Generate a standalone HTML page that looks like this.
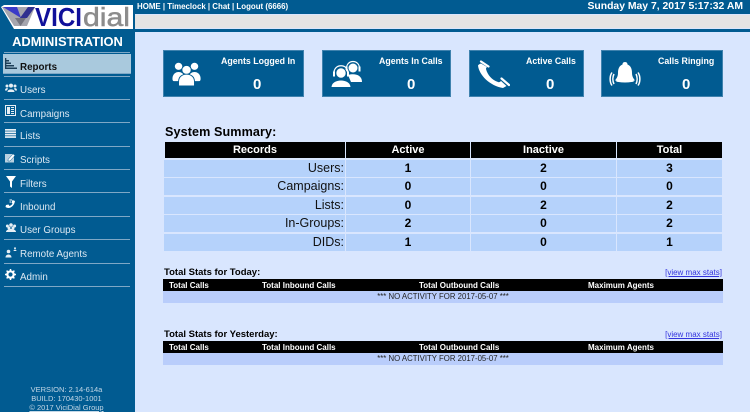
<!DOCTYPE html>
<html><head><meta charset="utf-8"><style>
html,body{margin:0;padding:0}
body{width:750px;height:412px;position:relative;overflow:hidden;background:#D9E6FE;font-family:"Liberation Sans",sans-serif;color:#000}
.a{position:absolute;white-space:nowrap}
.side{left:0;top:0;width:135px;height:412px;background:#015B91}
.m{left:20px;font-size:9.8px;color:#DCE8F2;line-height:14px}
.hr{left:4px;width:126px;height:1px;background:#7FA8C6}
.card{background:#015B91;border:1px solid #3F82AE;box-sizing:border-box;top:50px;height:47px;color:#fff;font-weight:bold}
.card .t{position:absolute;top:5px;font-size:8.8px;line-height:10px;white-space:nowrap}
.card .n{position:absolute;top:25px;font-size:15px;line-height:17px}
.h{background:#000;color:#fff;font-weight:bold;font-size:11px;text-align:center;line-height:17px;height:16px;top:142px}
.c{background:#B5D2FB;font-size:12px;line-height:17px;height:17px;text-align:center;font-weight:bold}
.l{left:164px;width:181px;text-align:right;font-weight:normal;font-size:12.5px;box-sizing:border-box;padding-right:1px;color:#111}
.x1{left:346px;width:124px}.x2{left:471px;width:145px}.x3{left:617px;width:105px}
.sh{left:163px;width:560px;height:12px;background:#000}
.sr{left:163px;width:560px;height:12px;background:#B9CDFB;font-size:7.8px;line-height:12px;text-align:center;color:#222}
.st{color:#fff;font-size:8px;font-weight:bold;line-height:13px}
.tt{left:164px;font-size:9.5px;font-weight:bold;line-height:11px}
.v{right:28px;font-size:8px;line-height:10px;color:#3333DD;text-decoration:underline}
</style></head><body>
<div class="a side"></div>
<div class="a" style="left:135px;top:0;width:615px;height:14px;background:#015B91"></div>
<div class="a" style="left:135px;top:15px;width:615px;height:13px;background:#E4E4E4"></div>
<div class="a" style="left:135px;top:29px;width:615px;height:3px;background:#015B91"></div>
<div class="a" style="left:137px;top:1px;font-size:7.9px;line-height:12px;color:#fff;font-weight:bold">HOME | Timeclock | Chat | Logout (6666)</div>
<div class="a" style="right:7px;top:0;font-size:10.4px;line-height:14px;color:#fff;font-weight:bold">Sunday May 7, 2017 5:17:32 AM</div>

<svg class="a" style="left:0;top:4px" width="134" height="25" viewBox="0 0 134 25">
<polygon points="1,3 4,1 133,1 133,25 14,25" fill="#fff"/>
<polygon points="2,3 35,3 27,22 14,22" fill="#A6A6AE"/>
<polygon points="3,3 17,3 21,14" fill="#3B3BC8"/>
<polygon points="20,14 28,3 35,3 27,14" fill="#30308F"/>
<polygon points="15,14 26,14 20.500,22" fill="#74747E"/>
<text x="35" y="22" font-family="Liberation Sans" font-weight="bold" font-size="26" fill="#10109A" textLength="47" lengthAdjust="spacingAndGlyphs">VICI</text>
<text x="83" y="22" font-family="Liberation Sans" font-size="26" fill="#8C8C8C" stroke="#8C8C8C" stroke-width=".5" textLength="47" lengthAdjust="spacingAndGlyphs">dial</text>
</svg>

<div class="a" style="left:0;width:135px;text-align:center;top:34px;font-size:12.9px;line-height:16px;color:#fff;font-weight:bold">ADMINISTRATION</div>
<div class="a hr" style="top:52px"></div>
<div class="a" style="left:3px;top:54px;width:128px;height:20px;background:#A9C9DD;border-bottom:1px solid #7FA8C6;box-sizing:border-box"></div>
<div class="a hr" style="top:76px"></div>

<svg class="a" style="left:5px;top:58px" width="12" height="12" viewBox="0 0 12 12"><g fill="#1d3f58"><rect x="0" y="0" width="1.300" height="11"/><rect x="1" y="2" width="3" height="1.500"/><rect x="1" y="4.500" width="5" height="1.500"/><rect x="1" y="7" width="8" height="1.500"/><rect x="1" y="9.500" width="11" height="1.500"/></g></svg>
<div class="a m" style="top:61px;color:#111;font-weight:bold">Reports</div>

<svg class="a" style="left:5px;top:83px" width="12" height="10" viewBox="0 0 12 10"><g fill="#E6EEF4"><circle cx="6" cy="2.600" r="2"/><circle cx="2" cy="3" r="1.500"/><circle cx="10" cy="3" r="1.500"/><path d="M2.500 9 C2.500 5.500 9.500 5.500 9.500 9Z"/><path d="M0 7.500 C0 4.800 2.500 4.800 3 5.500 L2 7.500Z"/><path d="M12 7.500 C12 4.800 9.500 4.800 9 5.500 L10 7.500Z"/></g></svg>
<div class="a m" style="top:84px">Users</div>
<div class="a hr" style="top:99px"></div>

<svg class="a" style="left:5px;top:105px" width="11" height="11" viewBox="0 0 11 11"><rect x=".5" y=".5" width="10" height="10" fill="none" stroke="#E6EEF4"/><rect x="2" y="2" width="3" height="7" fill="#E6EEF4"/><path d="M6 2.500H9M6 4.500H9M6 6.500H9M6 8.500H9" stroke="#E6EEF4"/></svg>
<div class="a m" style="top:108px">Campaigns</div>
<div class="a hr" style="top:122px"></div>

<svg class="a" style="left:5px;top:129px" width="11" height="9" viewBox="0 0 11 9"><g fill="#E6EEF4"><rect y="0" width="11" height="1.700"/><rect y="2.400" width="11" height="1.700"/><rect y="4.800" width="11" height="1.700"/><rect y="7.200" width="11" height="1.700"/></g></svg>
<div class="a m" style="top:130px">Lists</div>
<div class="a hr" style="top:146px"></div>

<svg class="a" style="left:5px;top:153px" width="11" height="10" viewBox="0 0 11 10"><rect x="0" y="1" width="9" height="8.500" fill="#B9D0E0"/><path d="M3 6.500 L8 1 L10 2.500 L5 8 L3 8Z" fill="#fff" stroke="#015B91" stroke-width=".5"/></svg>
<div class="a m" style="top:154px">Scripts</div>
<div class="a hr" style="top:169px"></div>

<svg class="a" style="left:6px;top:176px" width="10" height="12" viewBox="0 0 10 12"><path d="M0 0H10L6 5.500V12L4 10.500V5.500Z" fill="#fff"/></svg>
<div class="a m" style="top:178px">Filters</div>
<div class="a hr" style="top:192px"></div>

<svg class="a" style="left:5px;top:199px" width="11" height="11" viewBox="0 0 11 11"><path d="M0.500 8 C4 10.500 9 8 10 2 L7.500 1 L6.500 3.500 L7.500 4.500 C7 5.500 6 6.500 4.500 7 L3.500 5.500 L1 6Z" fill="#fff"/><path d="M4.500 1 H7 M4.500 3 H6" stroke="#fff" stroke-width="1"/></svg>
<div class="a m" style="top:201px">Inbound</div>
<div class="a hr" style="top:216px"></div>

<svg class="a" style="left:5px;top:223px" width="12" height="10" viewBox="0 0 12 10"><g fill="#E6EEF4"><circle cx="6" cy="2" r="1.800"/><circle cx="2.400" cy="3" r="1.500"/><circle cx="9.600" cy="3" r="1.500"/><circle cx="4" cy="5" r="1.500"/><circle cx="8" cy="5" r="1.500"/><path d="M1 9 C1 5 11 5 11 9Z"/></g></svg>
<div class="a m" style="top:224px">User Groups</div>
<div class="a hr" style="top:239px"></div>

<svg class="a" style="left:5px;top:246px" width="12" height="12" viewBox="0 0 12 12"><g fill="#E6EEF4"><circle cx="3.500" cy="5.500" r="1.800"/><path d="M0.500 11.500 C0.500 7.500 6.500 7.500 6.500 11.500Z"/><circle cx="10" cy="2.200" r="1"/><path d="M8.500 5 C8.500 3.200 11.500 3.200 11.500 5Z"/></g></svg>
<div class="a m" style="top:248px">Remote Agents</div>
<div class="a hr" style="top:263px"></div>

<svg class="a" style="left:5px;top:269px" width="11" height="11" viewBox="0 0 11 11"><circle cx="5.500" cy="5.500" r="3.200" fill="none" stroke="#fff" stroke-width="2.200"/><path d="M5.500 0V11M0 5.500H11M1.600 1.600L9.400 9.400M9.400 1.600L1.600 9.400" stroke="#fff" stroke-width="1.500" stroke-dasharray="1.800 7.400 1.800"/></svg>
<div class="a m" style="top:271px">Admin</div>
<div class="a hr" style="top:286px"></div>

<div class="a" style="left:0;width:133px;top:385px;text-align:center;font-size:7.500px;line-height:9px;color:#C3D7E6">VERSION: 2.14-614a<br>BUILD: 170430-1001<br><span style="text-decoration:underline">© 2017 ViciDial Group</span></div>

<div class="a card" style="left:163px;width:141px"><span class="t" style="left:57px">Agents Logged In</span><span class="n" style="left:89px">0</span></div>
<svg class="a" style="left:172px;top:61px" width="30" height="25" viewBox="0 0 32 28" preserveAspectRatio="none"><g fill="#fff" stroke="#015B91" stroke-width="1"><circle cx="7" cy="6" r="4.500"/><circle cx="24" cy="6" r="4.500"/><path d="M0 20 C0 9 14 9 14 20 L14 23 H2 C1 23 0 22 0 20Z"/><path d="M31 20 C31 9 17 9 17 20 L17 23 H29 C30 23 31 22 31 20Z"/><circle cx="15.500" cy="10" r="5"/><path d="M7 28 L7 23 C7 12 24 12 24 23 L24 28Z"/></g></svg>

<div class="a card" style="left:322px;width:129px"><span class="t" style="left:56px">Agents In Calls</span><span class="n" style="left:84px">0</span></div>
<svg class="a" style="left:331px;top:60px" width="32" height="28" viewBox="0 0 32 28"><g fill="#fff"><circle cx="22" cy="8" r="4.500"/><path d="M17 15 C24 13 31 15 31 22 H20Z"/></g><g fill="none" stroke="#fff" stroke-width="1.200"><path d="M15.500 9 C15 -1 29 -1 28.500 9"/></g><rect x="14.500" y="6.500" width="2" height="5" fill="#fff"/><rect x="27.500" y="6.500" width="2" height="5" fill="#fff"/><g fill="#fff" stroke="#015B91" stroke-width="1"><circle cx="10" cy="13" r="5.200"/><path d="M0 27.500 C0 17.500 20 17.500 20 27.500Z"/></g><path d="M3 14 C2 3 18 3 17 14" fill="none" stroke="#fff" stroke-width="1.200"/><rect x="2" y="11.500" width="2" height="5" fill="#fff"/><rect x="16" y="11.500" width="2" height="5" fill="#fff"/></svg>

<div class="a card" style="left:469px;width:115px"><span class="t" style="left:56px">Active Calls</span><span class="n" style="left:76px">0</span></div>
<svg class="a" style="left:476px;top:60px" width="34" height="29" viewBox="0 0 34 29"><path d="M2 5.500 C3 15 14 26 27 28 L30.500 26 L25 21 C24 22 23 22.500 22 22 C16 20 11.500 15 10 9 C10 8.500 10 8 11 7 L5 3.500 C3.500 4 2.500 4.500 2 5.500Z" fill="#fff"/><path d="M5 1.500 L12.500 6.500 M25.500 18.500 L33 25" stroke="#fff" stroke-width="2.200" stroke-linecap="round"/></svg>

<div class="a card" style="left:601px;width:122px"><span class="t" style="left:56px">Calls Ringing</span><span class="n" style="left:80px">0</span></div>
<svg class="a" style="left:609px;top:61px" width="32" height="26" viewBox="0 0 32 26"><path d="M16 1 C18 1 18.500 2.500 18.500 3.500 C22 5 23 8 23 12 C23 16 25 18 26 19.500 H6 C7 18 9 16 9 12 C9 8 10 5 13.500 3.500 C13.500 2.500 14 1 16 1Z" fill="#fff"/><ellipse cx="16" cy="20" rx="9" ry="1.500" fill="#fff"/><path d="M5 13 C3.500 16 3.500 20 5 23 M3 11.500 C0.500 15 0.500 21 3 24.500 M27 13 C28.500 16 28.500 20 27 23 M29 11.500 C31.500 15 31.500 21 29 24.500" fill="none" stroke="#fff" stroke-width="1.500"/></svg>

<div class="a" style="left:165px;top:125px;font-size:12.600px;line-height:15px;font-weight:bold;letter-spacing:.1px">System Summary:</div>
<div class="a h" style="left:165px;width:180px">Records</div>
<div class="a h x1">Active</div>
<div class="a h x2">Inactive</div>
<div class="a h x3">Total</div>

<div class="a c l" style="top:160px">Users:</div><div class="a c x1" style="top:160px">1</div><div class="a c x2" style="top:160px">2</div><div class="a c x3" style="top:160px">3</div>
<div class="a c l" style="top:178px">Campaigns:</div><div class="a c x1" style="top:178px">0</div><div class="a c x2" style="top:178px">0</div><div class="a c x3" style="top:178px">0</div>
<div class="a c l" style="top:197px">Lists:</div><div class="a c x1" style="top:197px">0</div><div class="a c x2" style="top:197px">2</div><div class="a c x3" style="top:197px">2</div>
<div class="a c l" style="top:215px">In-Groups:</div><div class="a c x1" style="top:215px">2</div><div class="a c x2" style="top:215px">0</div><div class="a c x3" style="top:215px">2</div>
<div class="a c l" style="top:234px">DIDs:</div><div class="a c x1" style="top:234px">1</div><div class="a c x2" style="top:234px">0</div><div class="a c x3" style="top:234px">1</div>

<div class="a tt" style="top:267px">Total Stats for Today:</div>
<div class="a v" style="top:268px">[view max stats]</div>
<div class="a sh" style="top:279px"></div>
<div class="a st" style="left:169px;top:279px">Total Calls</div>
<div class="a st" style="left:262px;top:279px">Total Inbound Calls</div>
<div class="a st" style="left:419px;top:279px">Total Outbound Calls</div>
<div class="a st" style="left:588px;top:279px">Maximum Agents</div>
<div class="a sr" style="top:291px">*** NO ACTIVITY FOR 2017-05-07 ***</div>

<div class="a tt" style="top:329px">Total Stats for Yesterday:</div>
<div class="a v" style="top:330px">[view max stats]</div>
<div class="a sh" style="top:341px"></div>
<div class="a st" style="left:169px;top:341px">Total Calls</div>
<div class="a st" style="left:262px;top:341px">Total Inbound Calls</div>
<div class="a st" style="left:419px;top:341px">Total Outbound Calls</div>
<div class="a st" style="left:588px;top:341px">Maximum Agents</div>
<div class="a sr" style="top:353px">*** NO ACTIVITY FOR 2017-05-07 ***</div>
</body></html>
